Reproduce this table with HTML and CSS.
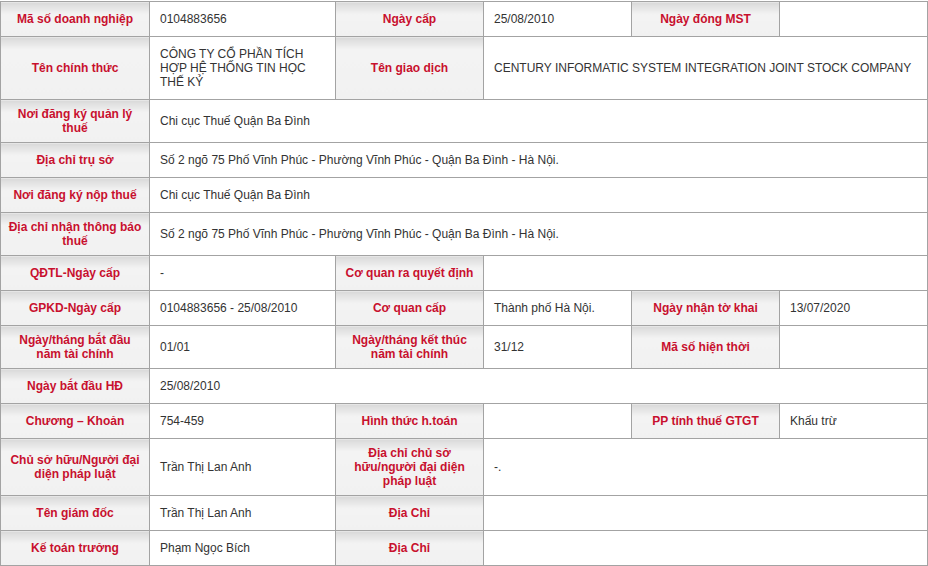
FILE: index.html
```html
<!DOCTYPE html>
<html lang="vi">
<head>
<meta charset="utf-8">
<title>Thông tin doanh nghiệp</title>
<link rel="stylesheet" href="styles.css">
</head>
<body>
<table class="info">
  <colgroup>
    <col class="c1"><col class="c2"><col class="c3"><col class="c4"><col class="c5"><col class="c6">
  </colgroup>
  <tbody>
    <tr>
      <th>Mã số doanh nghiệp</th><td>0104883656</td>
      <th>Ngày cấp</th><td>25/08/2010</td>
      <th>Ngày đóng MST</th><td></td>
    </tr>
    <tr>
      <th>Tên chính thức</th><td>CÔNG TY CỔ PHẦN TÍCH HỢP HỆ THỐNG TIN HỌC THẾ KỶ</td>
      <th>Tên giao dịch</th><td colspan="3">CENTURY INFORMATIC SYSTEM INTEGRATION JOINT STOCK COMPANY</td>
    </tr>
    <tr>
      <th>Nơi đăng ký quản lý thuế</th><td colspan="5">Chi cục Thuế Quận Ba Đình</td>
    </tr>
    <tr>
      <th>Địa chỉ trụ sở</th><td colspan="5">Số 2 ngõ 75 Phố Vĩnh Phúc - Phường Vĩnh Phúc - Quận Ba Đình - Hà Nội.</td>
    </tr>
    <tr>
      <th>Nơi đăng ký nộp thuế</th><td colspan="5">Chi cục Thuế Quận Ba Đình</td>
    </tr>
    <tr>
      <th>Địa chỉ nhận thông báo thuế</th><td colspan="5">Số 2 ngõ 75 Phố Vĩnh Phúc - Phường Vĩnh Phúc - Quận Ba Đình - Hà Nội.</td>
    </tr>
    <tr>
      <th>QĐTL-Ngày cấp</th><td>-</td>
      <th>Cơ quan ra quyết định</th><td colspan="3"></td>
    </tr>
    <tr>
      <th>GPKD-Ngày cấp</th><td>0104883656 - 25/08/2010</td>
      <th>Cơ quan cấp</th><td>Thành phố Hà Nội.</td>
      <th>Ngày nhận tờ khai</th><td>13/07/2020</td>
    </tr>
    <tr>
      <th>Ngày/tháng bắt đầu năm tài chính</th><td>01/01</td>
      <th>Ngày/tháng kết thúc năm tài chính</th><td>31/12</td>
      <th>Mã số hiện thời</th><td></td>
    </tr>
    <tr>
      <th>Ngày bắt đầu HĐ</th><td colspan="5">25/08/2010</td>
    </tr>
    <tr>
      <th>Chương – Khoản</th><td>754-459</td>
      <th>Hình thức h.toán</th><td></td>
      <th>PP tính thuế GTGT</th><td>Khấu trừ</td>
    </tr>
    <tr>
      <th>Chủ sở hữu/Người đại diện pháp luật</th><td>Trần Thị Lan Anh</td>
      <th>Địa chỉ chủ sở hữu/người đại diện pháp luật</th><td colspan="3">-.</td>
    </tr>
    <tr>
      <th>Tên giám đốc</th><td>Trần Thị Lan Anh</td>
      <th>Địa Chỉ</th><td colspan="3"></td>
    </tr>
    <tr>
      <th>Kế toán trưởng</th><td>Phạm Ngọc Bích</td>
      <th>Địa Chỉ</th><td colspan="3"></td>
    </tr>
  </tbody>
</table>
</body>
</html>
```

FILE: styles.css
```css
html, body {
  margin: 0;
  padding: 0;
  background: #ffffff;
}

body {
  padding-top: 1px;
  font-family: "Liberation Sans", Arial, sans-serif;
  font-size: 12px;
  line-height: 14px;
  color: #333333;
}

.info {
  width: 927px;
  table-layout: fixed;
  border-collapse: collapse;
}

.c1 { width: 149px; }
.c2 { width: 186px; }
.c3 { width: 148px; }
.c4 { width: 148px; }
.c5 { width: 148px; }
.c6 { width: 148px; }

.info th,
.info td {
  border: 1px solid #a3a3a3;
  vertical-align: middle;
}

.info th {
  padding: 7px 5px;
  height: 20px;
  font-weight: bold;
  color: #c8102e;
  text-align: center;
  background: linear-gradient(to bottom, #d9d9d9 0px, #f3f3f3 12px, #f1f1f1 100%);
}

.info td {
  padding: 10px 10px;
  height: 14px;
  text-align: left;
  background: #ffffff;
}
```
